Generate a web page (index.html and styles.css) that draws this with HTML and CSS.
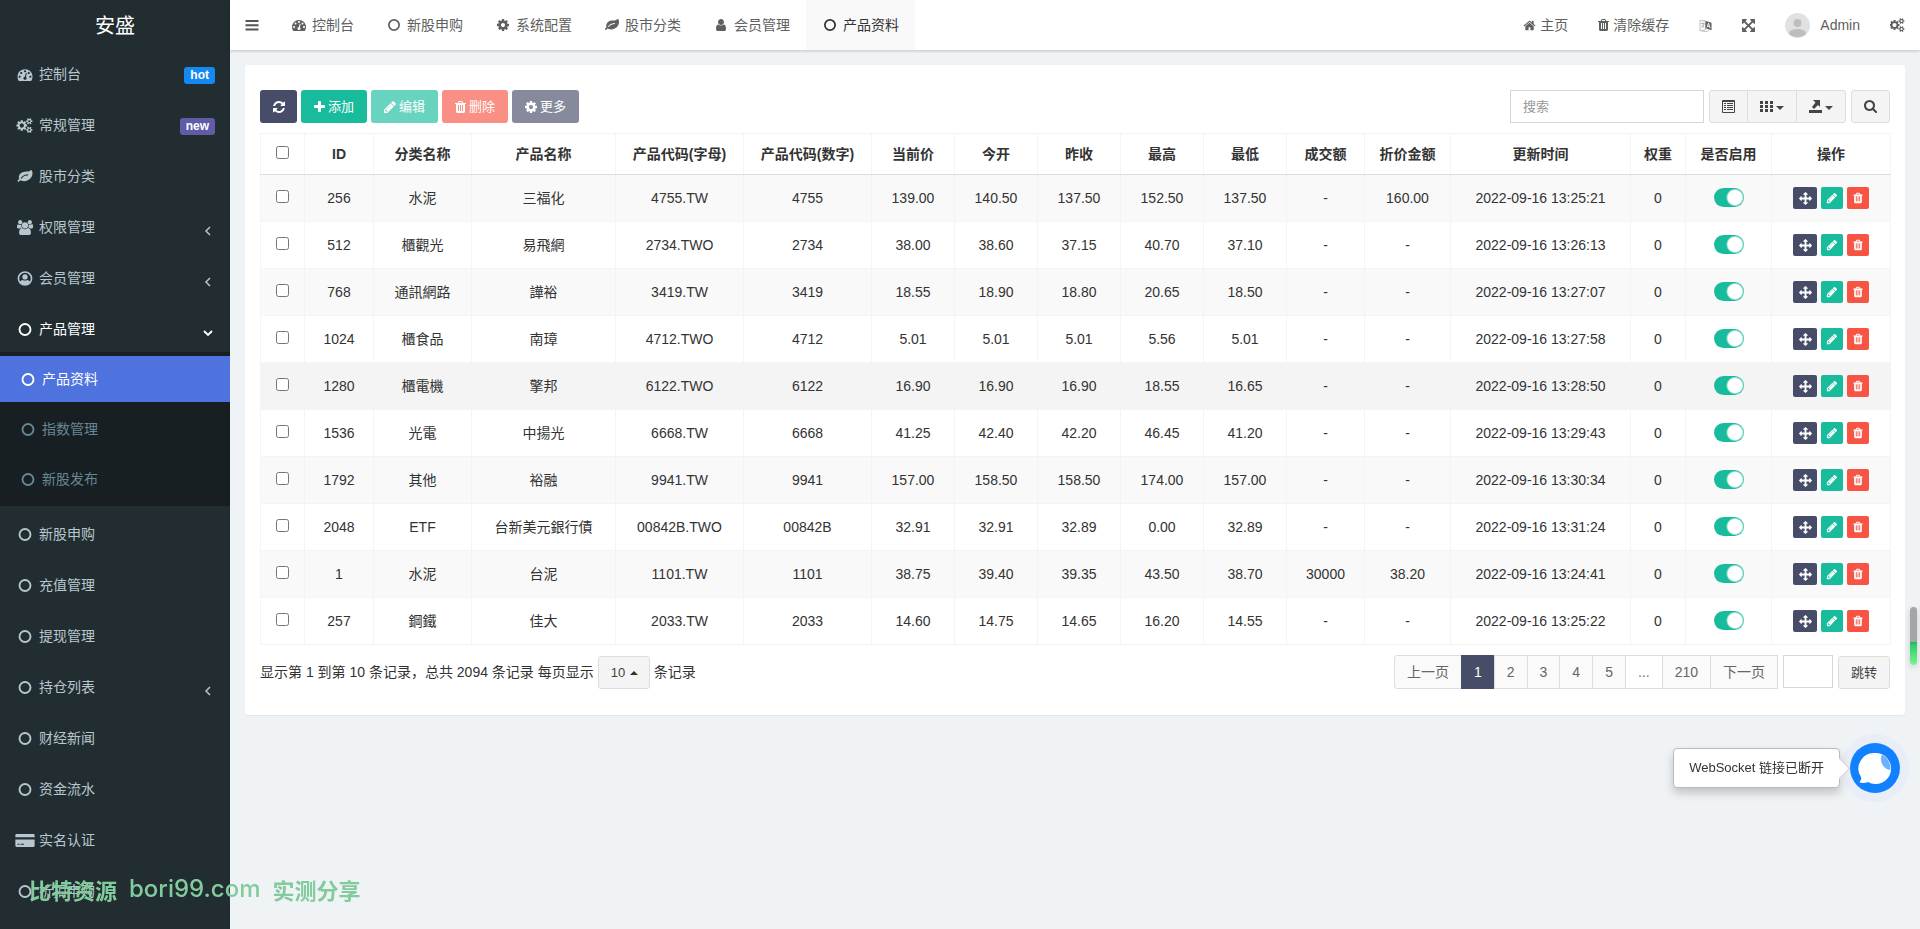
FILE: index.html
```html
<!DOCTYPE html>
<html lang="zh-CN">
<head>
    <meta charset="UTF-8">
    <meta name="viewport" content="width=device-width, initial-scale=1.0">
    <title>产品资料</title>
    <link rel="stylesheet" href="styles.css">
</head>
<body>
    <!-- icon sprite -->
    <svg class="sprite" aria-hidden="true">
        <symbol id="i-circle" viewBox="0 0 1792 1792"><circle cx="896" cy="896" r="656" fill="none" stroke="currentColor" stroke-width="224"/></symbol>
        <symbol id="i-dashboard" viewBox="0 0 1792 1792"><path d="M384 1152q0-53-37.500-90.500t-90.500-37.500-90.500 37.500-37.500 90.500 37.500 90.500 90.500 37.500 90.500-37.500 37.500-90.500zm192-448q0-53-37.500-90.500t-90.500-37.500-90.500 37.500-37.500 90.500 37.500 90.500 90.500 37.500 90.500-37.500 37.500-90.500zm428 481l101-382q6-26-7.500-48.500t-38.500-29.500-48 6.500-30 39.500l-101 382q-60 5-107 43.500t-63 98.500q-20 77 20 146t117 89 146-20 89-117q16-60-6-117t-72-91zm660-33q0-53-37.500-90.500t-90.500-37.500-90.500 37.500-37.500 90.500 37.500 90.500 90.500 37.500 90.500-37.500 37.500-90.500zm-640-640q0-53-37.500-90.500t-90.500-37.500-90.500 37.500-37.500 90.500 37.500 90.500 90.500 37.500 90.500-37.500 37.500-90.500zm448 192q0-53-37.500-90.500t-90.500-37.500-90.500 37.500-37.500 90.500 37.500 90.500 90.500 37.500 90.500-37.500 37.500-90.500zm320 448q0 261-141 483-19 29-54 29h-1402q-35 0-54-29-141-221-141-483 0-182 71-348t191-286 286-191 348-71 348 71 286 191 191 286 71 348z"/></symbol>
        <symbol id="i-cogs" viewBox="0 0 1920 1792"><path d="M832 896q0-106-75-181t-181-75-181 75-75 181 75 181 181 75 181-75 75-181zm768 512q0-52-38-90t-90-38-90 38-38 90q0 53 37.500 90.500t90.500 37.500 90.500-37.500 37.500-90.500zm0-1024q0-52-38-90t-90-38-90 38-38 90q0 53 37.500 90.500t90.500 37.500 90.500-37.500 37.500-90.500zm-384 421v185q0 10-7 19.500t-16 10.500l-155 24q-11 35-32 76 34 48 90 115 7 11 7 20 0 12-7 19-23 30-82.500 89.500t-78.500 59.500q-11 0-21-7l-115-90q-37 19-77 31-11 108-23 155-7 24-30 24h-186q-11 0-20-7.500t-10-17.500l-23-153q-34-10-75-31l-118 89q-7 7-20 7-11 0-21-8-144-133-144-160 0-9 7-19 10-14 41-53t47-61q-23-44-35-82l-152-24q-10-1-17-9.500t-7-19.500v-185q0-10 7-19.500t16-10.500l155-24q11-35 32-76-34-48-90-115-7-11-7-20 0-12 7-20 22-30 82-89t79-59q11 0 21 7l115 90q34-18 77-32 11-108 23-154 7-24 30-24h186q11 0 20 7.500t10 17.500l23 153q34 10 75 31l118-89q8-7 20-7 11 0 21 8 144 133 144 160 0 8-7 19-12 16-42 54t-45 60q23 48 34 82l152 23q10 2 17 10.500t7 19.500zm640 533v140q0 16-149 31-12 27-30 52 51 113 51 138 0 4-4 7-122 71-124 71-8 0-46-47t-52-68q-20 2-30 2t-30-2q-14 21-52 68t-46 47q-2 0-124-71-4-3-4-7 0-25 51-138-18-25-30-52-149-15-149-31v-140q0-16 149-31 13-29 30-52-51-113-51-138 0-4 4-7 4-2 35-20t59-34 30-16q8 0 46 46.500t52 67.500q20-2 30-2t30 2q51-71 92-112l6-2q4 0 124 70 4 3 4 7 0 25-51 138 17 23 30 52 149 15 149 31zm0-1024v140q0 16-149 31-12 27-30 52 51 113 51 138 0 4-4 7-122 71-124 71-8 0-46-47t-52-68q-20 2-30 2t-30-2q-14 21-52 68t-46 47q-2 0-124-71-4-3-4-7 0-25 51-138-18-25-30-52-149-15-149-31v-140q0-16 149-31 13-29 30-52-51-113-51-138 0-4 4-7 4-2 35-20t59-34 30-16q8 0 46 46.500t52 67.500q20-2 30-2t30 2q51-71 92-112l6-2q4 0 124 70 4 3 4 7 0 25-51 138 17 23 30 52 149 15 149 31z"/></symbol>
        <symbol id="i-leaf" viewBox="0 0 1792 1792"><path d="M1280 704q0-26-19-45t-45-19q-172 0-318 49.500t-259.500 134-235.500 219.500q-19 21-19 45 0 26 19 45t45 19q24 0 45-19 27-24 74-71t67-66q137-124 268.500-176t313.500-52q26 0 45-19t19-45zm512-198q0 95-20 193-46 224-184.500 383t-357.500 268q-214 108-438 108-148 0-286-47-15-5-88-42t-96-37q-16 0-39.500 32t-45 70-52.500 70-60 32q-43 0-63.500-17.500t-45.500-59.500q-2-4-6-11t-5.500-10-3-9.500-1.500-13.500q0-35 31-73.500t68-65.500 68-56 31-48q0-4-14-38t-16-44q-9-51-9-104 0-115 43.500-220t119-184.500 170.500-139 204-95.500q55-18 145-25.500t179.500-9 178.500-6 163.500-24 113.500-56.500l29.500-29.500 29.500-28 27-20 36.500-16 43.500-4.500q39 0 70.500 46t47.500 112 24 124 8 96z"/></symbol>
        <symbol id="i-users" viewBox="0 0 1920 1792"><path d="M593 896q-162 5-265 128h-134q-82 0-138-40.500t-56-118.500q0-353 124-353 6 0 43.500 21t97.500 42.500 119 21.500q67 0 133-23-5 37-5 66 0 159 93 293zm1071 637q0 120-73 189.500t-194 69.500h-874q-121 0-194-69.500t-73-189.500q0-53 3.500-103.500t14-109 26.500-108.500 43-97.500 62-81 85.500-53.500 111.500-20q10 0 43 21.500t73 48 107 48 135 21.500 135-21.500 107-48 73-48 43-21.500q61 0 111.500 20t85.500 53.500 62 81 43 97.500 26.500 108.500 14 109 3.500 103.500zm-1024-1277q0 106-75 181t-181 75-181-75-75-181 75-181 181-75 181 75 75 181zm704 384q0 159-112.500 271.500t-271.500 112.500-271.500-112.500-112.500-271.500 112.500-271.500 271.500-112.500 271.500 112.500 112.500 271.500zm576 225q0 78-56 118.500t-138 40.500h-134q-103-123-265-128 93-134 93-293 0-29-5-66 66 23 133 23 59 0 119-21.500t97.500-42.500 43.500-21q124 0 124 353zm-128-609q0 106-75 181t-181 75-181-75-75-181 75-181 181-75 181 75 75 181z"/></symbol>
        <symbol id="i-user-circle" viewBox="0 0 16 16"><circle cx="8" cy="8" r="7" fill="none" stroke="currentColor" stroke-width="1.700"/><circle cx="8" cy="6.300" r="2.800"/><path d="M2.500 11.500c1-1.500 2.200-2 3-2 1.200 1 3.800 1 5 0 .8 0 2 .5 3 2-1 2-3.200 3.500-5.500 3.500s-4.500-1.500-5.500-3.500z"/></symbol>
        <symbol id="i-user" viewBox="0 0 1792 1792"><path d="M1536 1399q0 109-62.500 187t-150.500 78h-854q-88 0-150.500-78t-62.500-187q0-85 8.500-160.500t31.500-152 58.500-131 94-89 134.500-34.500q131 128 313 128t313-128q76 0 134.500 34.500t94 89 58.500 131 31.500 152 8.500 160.500zm-256-887q0 159-112.500 271.500t-271.500 112.500-271.500-112.500-112.500-271.500 112.500-271.500 271.500-112.500 271.500 112.500 112.500 271.500z"/></symbol>
        <symbol id="i-card" viewBox="0 0 18 14"><path d="M1 1h16a1 1 0 0 1 1 1v2H0V2a1 1 0 0 1 1-1zM0 6h18v6a1 1 0 0 1-1 1H1a1 1 0 0 1-1-1zm2 4v1h2v-1zm3 0v1h3v-1z"/></symbol>
        <symbol id="i-angle-left" viewBox="0 0 10 14"><path d="M7 3L3 7l4 4" fill="none" stroke="currentColor" stroke-width="1.500"/></symbol>
        <symbol id="i-angle-down" viewBox="0 0 10 14"><path d="M1 5l4 4 4-4" fill="none" stroke="currentColor" stroke-width="1.800"/></symbol>
        <symbol id="i-bars" viewBox="0 0 14 14"><path d="M.5 2h13v2H.5zm0 4.200h13v2H.5zm0 4.300h13v2H.5z"/></symbol>
        <symbol id="i-cog" viewBox="128 0 1536 1792"><path d="M1152 896q0-106-75-181t-181-75-181 75-75 181 75 181 181 75 181-75 75-181zm512-109v222q0 12-8 23t-20 13l-185 28q-19 54-39 91 35 50 107 138 10 12 10 25t-9 23q-27 37-99 108t-94 71q-12 0-26-9l-138-108q-44 23-91 38-16 136-29 186-7 28-36 28h-222q-14 0-24.500-8.500t-11.500-21.500l-28-184q-49-16-90-37l-141 107q-10 9-25 9-14 0-25-11-126-114-165-168-7-10-7-23 0-12 8-23 15-21 51-66.500t54-70.500q-27-50-41-99l-183-27q-13-2-21-12.500t-8-23.500v-222q0-12 8-23t19-13l186-28q14-46 39-92-40-57-107-138-10-12-10-24 0-10 9-23 26-36 98.500-107.500t94.500-71.500q13 0 26 10l138 107q44-23 91-38 16-136 29-186 7-28 36-28h222q14 0 24.500 8.500t11.500 21.500l28 184q49 16 90 37l142-107q9-9 24-9 13 0 25 10 129 119 165 170 7 8 7 22 0 12-8 23-15 21-51 66.500t-54 70.500q26 50 41 98l183 28q13 2 21 12.500t8 23.500z"/></symbol>
        <symbol id="i-home" viewBox="0 0 1792 1792"><path d="M1472 992v480q0 26-19 45t-45 19h-384v-384h-256v384h-384q-26 0-45-19t-19-45v-480q0-1 .5-3t.5-3l575-474 575 474q1 2 1 6zm223-69l-62 74q-8 9-21 11h-3q-13 0-21-7l-692-577-692 577q-12 8-24 7-13-2-21-11l-62-74q-8-10-7-23.500t11-21.500l719-599q32-26 76-26t76 26l244 204v-195q0-14 9-23t23-9h192q14 0 23 9t9 23v408l219 182q10 8 11 21.500t-7 23.500z"/></symbol>
        <symbol id="i-trash" viewBox="192 0 1408 1792"><path d="M704 1376v-704q0-14-9-23t-23-9h-64q-14 0-23 9t-9 23v704q0 14 9 23t23 9h64q14 0 23-9t9-23zm256 0v-704q0-14-9-23t-23-9h-64q-14 0-23 9t-9 23v704q0 14 9 23t23 9h64q14 0 23-9t9-23zm256 0v-704q0-14-9-23t-23-9h-64q-14 0-23 9t-9 23v704q0 14 9 23t23 9h64q14 0 23-9t9-23zm-544-992h448l-48-117q-7-9-17-11h-317q-10 2-17 11zm928 32v64q0 14-9 23t-23 9h-96v948q0 83-47 143.500t-113 60.500h-832q-66 0-113-58.500t-47-141.500v-952h-96q-14 0-23-9t-9-23v-64q0-14 9-23t23-9h309l70-167q15-37 54-63t79-26h320q40 0 79 26t54 63l70 167h309q14 0 23 9t9 23z"/></symbol>
        <symbol id="i-language" viewBox="0 0 14 14"><path d="M1 1.500l6 1v9l-6 1.200z" fill="none" stroke="#bbb"/><path d="M2 5h4M4 4v1.500M2.500 9.500C4 8.500 5 7 5.300 5.200M3 6.500l2.500 3" fill="none" stroke="#999" stroke-width=".8"/><path d="M2.500.8L8 2.500 13.500 4v8L7 10V1.800z"/><path d="M8.700 9l1.500-4.500L12 9.800M9.200 7.600l2 .5" fill="none" stroke="#fff"/><path d="M3 13.300h6l2-1" fill="none" stroke="#bbb"/></symbol>
        <symbol id="i-expand" viewBox="128 128 1536 1536"><path d="M1411 541l-355 355 355 355 144-144q29-31 70-14 39 17 39 59v448q0 26-19 45t-45 19h-448q-42 0-59-40-17-39 14-69l144-144-355-355-355 355 144 144q31 30 14 69-17 40-59 40h-448q-26 0-45-19t-19-45v-448q0-42 40-59 39-17 69 14l144 144 355-355-355-355-144 144q-19 19-45 19-12 0-24-5-40-17-40-59v-448q0-26 19-45t45-19h448q42 0 59 40 17 39-14 69l-144 144 355 355 355-355-144-144q-31-30-14-69 17-40 59-40h448q26 0 45 19t19 45v448q0 42-39 59-13 5-25 5-26 0-45-19z"/></symbol>
        <symbol id="i-refresh" viewBox="128 0 1536 1792"><path d="M1639 1056q0 5-1 7-64 268-268 434.500t-478 166.500q-146 0-282.500-55t-243.500-157l-129 129q-19 19-45 19t-45-19-19-45v-448q0-26 19-45t45-19h448q26 0 45 19t19 45-19 45l-137 137q71 66 161 102t187 36q134 0 250-65t186-179q11-17 53-117 8-23 30-23h192q13 0 22.500 9.500t9.500 22.500zm25-800v448q0 26-19 45t-45 19h-448q-26 0-45-19t-19-45 19-45l138-138q-148-137-349-137-134 0-250 65t-186 179q-11 17-53 117-8 23-30 23h-199q-13 0-22.500-9.500t-9.500-22.500v-7q65-268 270-434.500t480-166.500q146 0 284 55.500t245 156.500l130-129q19-19 45-19t45 19 19 45z"/></symbol>
        <symbol id="i-plus" viewBox="192 0 1408 1792"><path d="M1600 736v192q0 40-28 68t-68 28h-416v416q0 40-28 68t-68 28h-192q-40 0-68-28t-28-68v-416h-416q-40 0-68-28t-28-68v-192q0-40 28-68t68-28h416v-416q0-40 28-68t68-28h192q40 0 68 28t28 68v416h416q40 0 68 28t28 68z"/></symbol>
        <symbol id="i-pencil" viewBox="128 0 1536 1792"><path d="M491 1536l91-91-235-235-91 91v107h128v128h107zm523-928q0-22-22-22-10 0-17 7l-542 542q-7 7-7 17 0 22 22 22 10 0 17-7l542-542q7-7 7-17zm-54-192l416 416-832 832h-416v-416zm683 96q0 53-37 90l-166 166-416-416 166-165q36-38 90-38 53 0 91 38l235 234q37 39 37 91z"/></symbol>
        <symbol id="i-arrows" viewBox="0 0 1792 1792"><path d="M1792 896q0 26-19 45l-256 256q-19 19-45 19t-45-19-19-45v-128h-384v384h128q26 0 45 19t19 45-19 45l-256 256q-19 19-45 19t-45-19l-256-256q-19-19-19-45t19-45 45-19h128v-384h-384v128q0 26-19 45t-45 19-45-19l-256-256q-19-19-19-45t19-45l256-256q19-19 45-19t45 19 19 45v128h384v-384h-128q-26 0-45-19t-19-45 19-45l256-256q19-19 45-19t45 19l256 256q19 19 19 45t-19 45-45 19h-128v384h384v-128q0-26 19-45t45-19 45 19l256 256q19 19 19 45z"/></symbol>
        <symbol id="i-list" viewBox="0 0 13 13"><path d="M.5.500h12v12H.5zM0 1.500h13" fill="none" stroke="currentColor"/><path d="M2 3h2v1H2zm3 0h6v1H5zM2 5h2v1H2zm3 0h6v1H5zM2 7h2v1H2zm3 0h6v1H5zM2 9h2v1H2zm3 0h6v1H5z"/></symbol>
        <symbol id="i-grid" viewBox="0 0 13 13"><path d="M0 1h3v3H0zm5 0h3v3H5zm5 0h3v3h-3zM0 5h3v3H0zm5 0h3v3H5zm5 0h3v3h-3zM0 9h3v3H0zm5 0h3v3H5zm5 0h3v3h-3z"/></symbol>
        <symbol id="i-export" viewBox="0 0 13 13"><path d="M0 10h13v3H0zM4 0h7v7L9 5 5 9 3 7l3.500-4.500z"/></symbol>
        <symbol id="i-search" viewBox="64 128 1664 1664"><path d="M1216 832q0-185-131.500-316.500t-316.500-131.500-316.500 131.500-131.500 316.500 131.500 316.500 316.500 131.500 316.500-131.500 131.500-316.500zm512 832q0 52-38 90t-90 38q-54 0-90-38l-343-342q-179 124-399 124-143 0-273.500-55.500t-225-150-150-225-55.500-273.500 55.500-273.500 150-225 225-150 273.500-55.500 273.500 55.500 225 150 150 225 55.500 273.500q0 220-124 399l343 343q37 37 37 90z"/></symbol>
    </svg>

    <div class="wrapper">
        <aside class="sidebar">
            <a href="#" class="logo">安盛</a>
            <ul class="menu">
                <li><a href="#"><svg class="icon"><use href="#i-dashboard"/></svg><span>控制台</span><small class="label label-hot">hot</small></a></li>
                <li><a href="#"><svg class="icon"><use href="#i-cogs"/></svg><span>常规管理</span><small class="label label-new">new</small></a></li>
                <li><a href="#"><svg class="icon"><use href="#i-leaf"/></svg><span>股市分类</span></a></li>
                <li><a href="#"><svg class="icon"><use href="#i-users"/></svg><span>权限管理</span><svg class="arrow"><use href="#i-angle-left"/></svg></a></li>
                <li><a href="#"><svg class="icon"><use href="#i-user-circle"/></svg><span>会员管理</span><svg class="arrow"><use href="#i-angle-left"/></svg></a></li>
                <li class="open">
                    <a href="#"><svg class="icon"><use href="#i-circle"/></svg><span>产品管理</span><svg class="arrow"><use href="#i-angle-down"/></svg></a>
                    <ul class="submenu">
                        <li class="active"><a href="#"><svg class="icon"><use href="#i-circle"/></svg><span>产品资料</span></a></li>
                        <li><a href="#"><svg class="icon"><use href="#i-circle"/></svg><span>指数管理</span></a></li>
                        <li><a href="#"><svg class="icon"><use href="#i-circle"/></svg><span>新股发布</span></a></li>
                    </ul>
                </li>
                <li><a href="#"><svg class="icon"><use href="#i-circle"/></svg><span>新股申购</span></a></li>
                <li><a href="#"><svg class="icon"><use href="#i-circle"/></svg><span>充值管理</span></a></li>
                <li><a href="#"><svg class="icon"><use href="#i-circle"/></svg><span>提现管理</span></a></li>
                <li><a href="#"><svg class="icon"><use href="#i-circle"/></svg><span>持仓列表</span><svg class="arrow"><use href="#i-angle-left"/></svg></a></li>
                <li><a href="#"><svg class="icon"><use href="#i-circle"/></svg><span>财经新闻</span></a></li>
                <li><a href="#"><svg class="icon"><use href="#i-circle"/></svg><span>资金流水</span></a></li>
                <li><a href="#"><svg class="icon"><use href="#i-card"/></svg><span>实名认证</span></a></li>
                <li><a href="#"><svg class="icon"><use href="#i-circle"/></svg><span>折扣申购</span></a></li>
            </ul>
        </aside>

        <div class="main">
            <header class="navbar">
                <button type="button" class="toggle" aria-label="菜单"><svg class="icon"><use href="#i-bars"/></svg></button>
                <nav class="tabs">
                    <a href="#"><svg class="icon"><use href="#i-dashboard"/></svg>控制台</a>
                    <a href="#"><svg class="icon"><use href="#i-circle"/></svg>新股申购</a>
                    <a href="#"><svg class="icon"><use href="#i-cog"/></svg>系统配置</a>
                    <a href="#"><svg class="icon"><use href="#i-leaf"/></svg>股市分类</a>
                    <a href="#"><svg class="icon"><use href="#i-user"/></svg>会员管理</a>
                    <a href="#" class="active"><svg class="icon"><use href="#i-circle"/></svg>产品资料</a>
                </nav>
                <nav class="tools">
                    <a href="#"><svg class="icon icon-small"><use href="#i-home"/></svg>主页</a>
                    <a href="#"><svg class="icon icon-narrow"><use href="#i-trash"/></svg>清除缓存</a>
                    <a href="#" aria-label="语言"><svg class="icon icon-small"><use href="#i-language"/></svg></a>
                    <a href="#" aria-label="全屏"><svg class="icon icon-small"><use href="#i-expand"/></svg></a>
                    <a href="#" class="user">
                        <svg class="avatar" viewBox="0 0 25 25"><circle cx="12.500" cy="12.500" r="12.500" fill="#e1e1e1"/><circle cx="12.500" cy="10" r="4" fill="#bdbdbd"/><ellipse cx="12.500" cy="20" rx="8.500" ry="4" fill="#bdbdbd"/></svg>
                        Admin
                    </a>
                    <a href="#" aria-label="设置"><svg class="icon icon-wide"><use href="#i-cogs"/></svg></a>
                </nav>
            </header>

            <main class="content">
                <section class="panel">
                    <div class="toolbar">
                        <button type="button" class="btn btn-primary btn-refresh" aria-label="刷新"><svg class="icon"><use href="#i-refresh"/></svg></button>
                        <button type="button" class="btn btn-success"><svg class="icon icon-narrow"><use href="#i-plus"/></svg>添加</button>
                        <button type="button" class="btn btn-success disabled"><svg class="icon"><use href="#i-pencil"/></svg>编辑</button>
                        <button type="button" class="btn btn-danger disabled"><svg class="icon icon-narrow"><use href="#i-trash"/></svg>删除</button>
                        <button type="button" class="btn btn-primary disabled"><svg class="icon"><use href="#i-cog"/></svg>更多</button>

                        <div class="search">
                            <input type="text" class="search-input" placeholder="搜索" aria-label="搜索">
                            <div class="btn-group">
                                <button type="button" class="btn btn-default" aria-label="切换"><svg class="icon icon-tool"><use href="#i-list"/></svg></button>
                                <button type="button" class="btn btn-default" aria-label="列"><svg class="icon icon-tool"><use href="#i-grid"/></svg><span class="caret"></span></button>
                                <button type="button" class="btn btn-default" aria-label="导出"><svg class="icon icon-tool"><use href="#i-export"/></svg><span class="caret"></span></button>
                            </div>
                            <button type="button" class="btn btn-default" aria-label="查找"><svg class="icon icon-tool"><use href="#i-search"/></svg></button>
                        </div>
                    </div>

                    <table class="table">
                        <colgroup>
                            <col class="c-check"><col class="c-id"><col class="c-type"><col class="c-name">
                            <col class="c-code"><col class="c-code"><col class="c-price"><col class="c-price">
                            <col class="c-price"><col class="c-price"><col class="c-price"><col class="c-deal">
                            <col class="c-discount"><col class="c-time"><col class="c-weight"><col class="c-switch"><col class="c-action">
                        </colgroup>
                        <thead>
                            <tr>
                                <th><input type="checkbox" class="check" aria-label="全选"></th>
                                <th>ID</th>
                                <th>分类名称</th>
                                <th>产品名称</th>
                                <th>产品代码(字母)</th>
                                <th>产品代码(数字)</th>
                                <th>当前价</th>
                                <th>今开</th>
                                <th>昨收</th>
                                <th>最高</th>
                                <th>最低</th>
                                <th>成交额</th>
                                <th>折价金额</th>
                                <th>更新时间</th>
                                <th>权重</th>
                                <th>是否启用</th>
                                <th>操作</th>
                            </tr>
                        </thead>
                        <tbody id="rows"></tbody>
                    </table>

                    <div class="table-footer">
                        <div class="page-info">
                            <span>显示第 1 到第 10 条记录，总共 2094 条记录</span>
                            <label for="page_size">每页显示</label>
                            <span class="page-size">
                                <select id="page_size"><option>10</option><option>25</option><option>50</option></select>
                                <span class="caret caret-up"></span>
                            </span>
                            <span>条记录</span>
                        </div>
                        <div class="pager">
                            <ul class="pagination">
                                <li><a href="#">上一页</a></li>
                                <li class="active"><a href="#">1</a></li>
                                <li><a href="#">2</a></li>
                                <li><a href="#">3</a></li>
                                <li><a href="#">4</a></li>
                                <li><a href="#">5</a></li>
                                <li class="dots"><a href="#">...</a></li>
                                <li><a href="#">210</a></li>
                                <li><a href="#">下一页</a></li>
                            </ul>
                            <input type="text" class="jump-input" aria-label="页码">
                            <button type="button" class="btn btn-default btn-jump">跳转</button>
                        </div>
                    </div>
                </section>
            </main>
        </div>
    </div>

    <div class="chat">
        <div class="chat-tip">WebSocket 链接已断开</div>
        <button type="button" class="chat-btn" aria-label="客服">
            <svg viewBox="0 0 50 50"><path d="M25 10a15.500 15.500 0 1 1-7 29c-2 .8-5 1.200-7.500.8-1-.3-1-1.200-.3-1.800 1-1 1.300-2.500.8-4A15.500 15.500 0 0 1 25 10z" fill="#fff"/><path d="M32 11.500a15.500 15.500 0 0 1 8.500 15.500A11 11 0 0 1 32 11.500z" fill="#6fb1ff"/></svg>
        </button>
    </div>
    <div class="meter"></div>
    <div class="watermark"><span>比特资源</span><span class="site">bori99.com</span><span>实测分享</span></div>

    <script src="script.js"></script>
</body>
</html>
```
FILE: styles.css
```css
* {
    box-sizing: border-box;
}

body {
    margin: 0;
    font-family: "Liberation Sans", Arial, "Noto Sans CJK SC", sans-serif;
    font-size: 14px;
    line-height: 20px;
    color: #333;
    background-color: #eff3f6;
}

a {
    color: inherit;
    text-decoration: none;
}

ul {
    list-style: none;
    margin: 0;
    padding: 0;
}

button, input, select {
    font-family: inherit;
}

.sprite {
    display: none;
}

.icon {
    width: 14px;
    height: 14px;
    flex: none;
    fill: currentColor;
}

.icon-small {
    width: 13px;
    height: 13px;
}

.icon-narrow {
    width: 11px;
}

.icon-wide {
    width: 15px;
}

.wrapper {
    display: flex;
    height: 100vh;
    overflow: hidden;
}

/* sidebar */
.sidebar {
    width: 230px;
    flex: none;
    background-color: #222d32;
    color: #b8c7ce;
    overflow: hidden;
}

.logo {
    display: block;
    height: 50px;
    line-height: 52px;
    text-align: center;
    font-size: 20px;
    color: #fff;
}

.menu > li {
    margin-bottom: 3px;
}

.menu a {
    display: flex;
    align-items: center;
    gap: 4px;
    height: 48px;
    padding: 0 15px;
}

.menu .icon {
    width: 20px;
    height: 15px;
}

.menu .open > a {
    color: #fff;
}

.menu .label {
    margin-left: auto;
    margin-top: 2px;
    padding: 0 6px;
    border-radius: 3px;
    font-size: 12px;
    font-weight: bold;
    line-height: 17px;
    color: #fff;
}

.label-hot {
    background-color: #1688f1;
}

.label-new {
    background-color: #605ca8;
}

.arrow {
    width: 10px;
    height: 14px;
    margin: 8px 2px 0 auto;
}

.submenu {
    margin: -1px 0 4px;
    padding-top: 4px;
    background-color: #181f23;
    color: #678797;
}

.submenu li {
    padding-bottom: 4px;
}

.submenu a {
    height: 46px;
    padding-left: 18px;
}

.submenu .active a {
    background-color: #4e73df;
    color: #fff;
}

/* top bar */
.main {
    flex: 1;
    min-width: 0;
}

.navbar {
    position: relative;
    display: flex;
    align-items: center;
    height: 50px;
    background-color: #fff;
    box-shadow: 0 1px 3px rgba(0, 0, 0, 0.2);
    color: #606060;
}

.toggle {
    display: flex;
    width: 45px;
    padding: 0 0 0 15px;
    border: none;
    background: none;
    color: #555;
    cursor: pointer;
}

.tabs, .tools {
    display: flex;
}

.tools {
    margin-left: auto;
}

.tabs a, .tools a {
    display: flex;
    align-items: center;
    height: 50px;
    padding: 0 15px;
}

.tabs a {
    gap: 4px;
    padding-right: 16px;
}

.tabs .icon {
    width: 18px;
}

.tabs .active {
    background-color: #f9f9f9;
    color: #333;
}

.tools a {
    gap: 4px;
}

.tools .user {
    gap: 10px;
}

.avatar {
    width: 25px;
    height: 25px;
}

/* panel */
.content {
    padding: 15px;
}

.panel {
    padding: 25px 15px;
    border-radius: 3px;
    background-color: #fff;
    box-shadow: 0 1px 1px rgba(0, 0, 0, 0.05);
}

.toolbar {
    display: flex;
    gap: 4px;
    margin-bottom: 10px;
}

.btn {
    display: flex;
    align-items: center;
    justify-content: center;
    gap: 3px;
    height: 33px;
    padding: 0 12px;
    border: 1px solid transparent;
    border-radius: 3px;
    font-size: 13px;
    line-height: 20px;
    color: #fff;
    cursor: pointer;
}

.btn .icon {
    width: 12px;
    height: 14px;
}

.btn .icon-narrow {
    width: 11px;
}

.btn-refresh {
    width: 37px;
}

.btn-primary {
    background-color: #474c68;
}

.btn-success {
    background-color: #18bc9c;
}

.btn-danger {
    background-color: #f75444;
}

.btn.disabled {
    opacity: 0.65;
}

.btn-default {
    background-color: #f4f4f4;
    border-color: #ddd;
    color: #444;
}

.btn .icon-tool {
    width: 13px;
    height: 13px;
}

.caret {
    border-top: 4px solid currentColor;
    border-left: 4px solid transparent;
    border-right: 4px solid transparent;
    margin-top: 2px;
}

.caret-up {
    border-top: none;
    border-bottom: 4px solid currentColor;
}

.search {
    display: flex;
    gap: 5px;
    margin-left: auto;
}

.search-input {
    width: 194px;
    height: 33px;
    padding: 0 12px;
    border: 1px solid #d2d6de;
    font-size: 13px;
}

.search-input::placeholder {
    color: #999;
}

.btn-group {
    display: flex;
}

.btn-group .btn {
    border-radius: 0;
}

.btn-group .btn + .btn {
    margin-left: -1px;
}

.btn-group .btn:first-child {
    border-radius: 3px 0 0 3px;
}

.btn-group .btn:last-child {
    border-radius: 0 3px 3px 0;
}

/* table */
.table {
    width: 100%;
    table-layout: fixed;
    border-collapse: collapse;
}

.table th, .table td {
    height: 47px;
    padding: 0;
    border: 1px solid #f4f4f4;
    text-align: center;
    white-space: nowrap;
}

.table th {
    height: 41px;
    border-bottom-color: #ddd;
}

.table tbody tr:nth-child(odd) {
    background-color: #f9f9f9;
}

.table tbody tr.hover {
    background-color: #f4f4f4;
}

.check {
    display: block;
    width: 13px;
    height: 13px;
    margin: 0 auto 3px;
}

.c-check { width: 44px; }
.c-id { width: 69px; }
.c-type { width: 98px; }
.c-name { width: 144px; }
.c-code { width: 128px; }
.c-price { width: 83px; }
.c-deal { width: 78px; }
.c-discount { width: 86px; }
.c-time { width: 180px; }
.c-weight { width: 55px; }
.c-switch { width: 86px; }
.c-action { width: 119px; }

.switch {
    appearance: none;
    display: block;
    width: 30px;
    height: 19px;
    margin: 0 auto 1px;
    border-radius: 10px;
    background: radial-gradient(circle at 21px 50%, #fff 7px, #18bc9c 9px);
    cursor: pointer;
}

.actions {
    display: flex;
    justify-content: center;
    gap: 4px;
}

.btn-xs {
    width: 22px;
    height: 22px;
    padding: 0;
    border-radius: 2px;
}

.btn-move {
    width: 24px;
}

.btn-xs .icon {
    height: 12px;
}

.btn-move .icon {
    width: 13px;
    height: 13px;
}

.btn-xs .icon-narrow {
    width: 10px;
}

/* footer */
.table-footer {
    display: flex;
    justify-content: space-between;
    padding: 10px 0 1px;
}

.page-info {
    display: flex;
    align-items: center;
    gap: 4px;
    height: 34px;
}

.page-size {
    position: relative;
}

.page-size select {
    appearance: none;
    display: block;
    width: 52px;
    height: 33px;
    padding: 0 12px;
    border: 1px solid #ddd;
    border-radius: 3px;
    background-color: #f4f4f4;
    font-size: 13px;
    color: #444;
}

.page-size .caret {
    position: absolute;
    top: 13px;
    right: 12px;
    pointer-events: none;
}

.pager {
    display: flex;
    gap: 5px;
}

.pagination {
    display: flex;
}

.pagination a {
    display: block;
    height: 34px;
    margin-left: -1px;
    padding: 6px 12px;
    border: 1px solid #ddd;
    background-color: #fafafa;
    color: #666;
}

.pagination li:first-child a {
    border-radius: 3px 0 0 3px;
}

.pagination .active a {
    border-color: #474c68;
    background-color: #474c68;
    color: #fff;
}

.pagination .dots a {
    background-color: #fff;
    color: #777;
}

.jump-input {
    width: 50px;
    height: 33px;
    border: 1px solid #d2d6de;
}

.btn-jump {
    margin-top: 1px;
}

/* floating widgets */
.chat {
    position: fixed;
    right: 20px;
    bottom: 136px;
    display: flex;
    align-items: center;
    gap: 10px;
}

.chat-tip {
    position: relative;
    padding: 9px 15px;
    border: 1px solid #bbb;
    border-radius: 4px;
    background-color: #fff;
    box-shadow: 0 5px 10px rgba(0, 0, 0, 0.2);
    font-size: 13px;
}

.chat-tip::after {
    content: "";
    position: absolute;
    top: 12px;
    right: -8px;
    width: 14px;
    height: 14px;
    border: 1px solid #ccc;
    border-width: 1px 1px 0 0;
    background-color: #fff;
    transform: rotate(45deg);
}

.chat-btn {
    width: 50px;
    height: 50px;
    padding: 0;
    border: none;
    border-radius: 50%;
    background-color: #1181ff;
    box-shadow: 0 0 0 9px rgba(64, 100, 255, 0.03);
    cursor: pointer;
}

.chat-btn svg {
    display: block;
}

.meter {
    position: fixed;
    right: 3px;
    top: 607px;
    width: 7px;
    height: 58px;
    border-radius: 4px;
    background: linear-gradient(#a5a5a5 35px, #1fb655 35px, #2ecc71 38px, #7df58a 58px);
    box-shadow: 0 2px 6px rgba(0, 0, 0, 0.15);
}

.watermark {
    position: fixed;
    left: 29px;
    bottom: 24px;
    display: flex;
    gap: 12px;
    font-family: "Noto Sans CJK SC", sans-serif;
    font-size: 22px;
    font-weight: bold;
    line-height: 32px;
    color: #82cb9c;
    pointer-events: none;
}

.watermark .site {
    font-family: Inter, sans-serif;
    font-size: 24px;
    font-weight: 500;
}
```
FILE: script.js
```js
// id, category, name, code, number, current, open, last close, high, low, volume, discount, updated
const products = [
    [256, "水泥", "三福化", "4755.TW", "4755", "139.00", "140.50", "137.50", "152.50", "137.50", "-", "160.00", "13:25:21"],
    [512, "櫃觀光", "易飛網", "2734.TWO", "2734", "38.00", "38.60", "37.15", "40.70", "37.10", "-", "-", "13:26:13"],
    [768, "通訊網路", "譁裕", "3419.TW", "3419", "18.55", "18.90", "18.80", "20.65", "18.50", "-", "-", "13:27:07"],
    [1024, "櫃食品", "南璋", "4712.TWO", "4712", "5.01", "5.01", "5.01", "5.56", "5.01", "-", "-", "13:27:58"],
    [1280, "櫃電機", "擎邦", "6122.TWO", "6122", "16.90", "16.90", "16.90", "18.55", "16.65", "-", "-", "13:28:50"],
    [1536, "光電", "中揚光", "6668.TW", "6668", "41.25", "42.40", "42.20", "46.45", "41.20", "-", "-", "13:29:43"],
    [1792, "其他", "裕融", "9941.TW", "9941", "157.00", "158.50", "158.50", "174.00", "157.00", "-", "-", "13:30:34"],
    [2048, "ETF", "台新美元銀行債", "00842B.TWO", "00842B", "32.91", "32.91", "32.89", "0.00", "32.89", "-", "-", "13:31:24"],
    [1, "水泥", "台泥", "1101.TW", "1101", "38.75", "39.40", "39.35", "43.50", "38.70", "30000", "38.20", "13:24:41"],
    [257, "鋼鐵", "佳大", "2033.TW", "2033", "14.60", "14.75", "14.65", "16.20", "14.55", "-", "-", "13:25:22"]
];

const rows = document.getElementById("rows");

products.forEach(product => {
    const id = product[0];
    const cells = product.slice(0, 12).map(value => `<td>${value}</td>`).join("");
    const tr = document.createElement("tr");

    // highlighted row
    if (id === 1280) {
        tr.className = "hover";
    }

    tr.innerHTML = `
        <td><input type="checkbox" class="check" aria-label="选择 ${id}"></td>
        ${cells}
        <td>2022-09-16 ${product[12]}</td>
        <td>0</td>
        <td><input type="checkbox" class="switch" aria-label="启用 ${id}" checked></td>
        <td>
            <div class="actions">
                <button type="button" class="btn btn-xs btn-move btn-primary" aria-label="移动"><svg class="icon"><use href="#i-arrows"/></svg></button>
                <button type="button" class="btn btn-xs btn-success" aria-label="编辑"><svg class="icon"><use href="#i-pencil"/></svg></button>
                <button type="button" class="btn btn-xs btn-danger" aria-label="删除"><svg class="icon icon-narrow"><use href="#i-trash"/></svg></button>
            </div>
        </td>
    `;

    rows.appendChild(tr);
});
```
